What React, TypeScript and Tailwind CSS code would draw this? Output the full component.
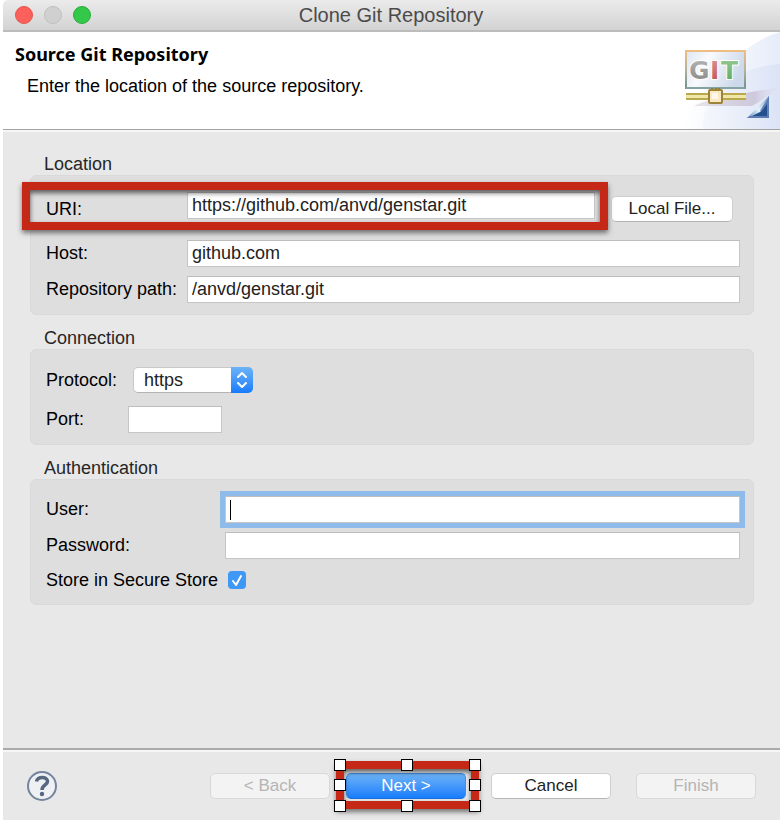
import React from "react";

const fieldBase =
  "block h-[27px] min-w-0 rounded-none border border-[#c6c6c6] border-t-[#bdbdbd] bg-white px-1 text-[18px] leading-[25px] text-[#222] caret-transparent outline-none";

const buttonBase =
  "h-[26px] rounded-[5px] border text-[17px] leading-6 shrink-0";

function Group({
  title,
  first,
  className,
  children,
}: {
  title: string;
  first?: boolean;
  className: string;
  children: React.ReactNode;
}) {
  return (
    <section aria-label={title} className={first ? "pt-[21px]" : "pt-3"}>
      <h2 className="h-[22px] pl-[14px] text-[18px] leading-[22px] text-[#262626]">{title}</h2>
      <div
        className={`relative rounded-[6px] border border-[#d9d9d9] bg-[#dedede] pr-[13px] pl-[15px] ${className}`}
      >
        {children}
      </div>
    </section>
  );
}

function Label({
  htmlFor,
  className,
  children,
}: {
  htmlFor: string;
  className: string;
  children: React.ReactNode;
}) {
  return (
    <label htmlFor={htmlFor} className={`shrink-0 text-[18px] leading-[26px] whitespace-nowrap ${className}`}>
      {children}
    </label>
  );
}

function Handle({ className }: { className: string }) {
  return <span className={`absolute size-3 border border-black bg-white ${className}`} />;
}

function GitBanner() {
  return (
    <svg width="110" height="97" viewBox="0 0 110 97" className="block shrink-0" role="img" aria-label="Git">
      <defs>
        <linearGradient id="sky" x1="0" y1="0" x2="1" y2="0">
          <stop offset="0" stopColor="#ffffff" />
          <stop offset="0.6" stopColor="#f1f5fc" />
          <stop offset="1" stopColor="#e6ecf9" />
        </linearGradient>
        <linearGradient id="hill" x1="0" y1="0" x2="1" y2="0">
          <stop offset="0" stopColor="#f3f6fc" />
          <stop offset="1" stopColor="#d8e0f5" />
        </linearGradient>
        <linearGradient id="screen" x1="0" y1="0" x2="1" y2="0.3">
          <stop offset="0" stopColor="#dde6f2" />
          <stop offset="0.4" stopColor="#f8fafd" />
          <stop offset="1" stopColor="#cdd9ea" />
        </linearGradient>
        <linearGradient id="frame" x1="0" y1="0" x2="0" y2="1">
          <stop offset="0" stopColor="#efbd84" />
          <stop offset="0.5" stopColor="#b6b39c" />
          <stop offset="1" stopColor="#6e9490" />
        </linearGradient>
        <linearGradient id="shade" x1="0" y1="0" x2="1" y2="0">
          <stop offset="0" stopColor="#c9bccb" stopOpacity="0.4" />
          <stop offset="0.7" stopColor="#bfb2c8" stopOpacity="0.6" />
          <stop offset="1" stopColor="#d9d6e8" stopOpacity="0" />
        </linearGradient>
        <linearGradient id="gray" x1="0" y1="0" x2="0" y2="1">
          <stop offset="0" stopColor="#b8b8b8" />
          <stop offset="1" stopColor="#858585" />
        </linearGradient>
        <linearGradient id="red" x1="0" y1="0" x2="0" y2="1">
          <stop offset="0" stopColor="#d99a9c" />
          <stop offset="1" stopColor="#bd4a50" />
        </linearGradient>
        <linearGradient id="green" x1="0" y1="0" x2="0" y2="1">
          <stop offset="0" stopColor="#9bcb9a" />
          <stop offset="1" stopColor="#58a75b" />
        </linearGradient>
        <linearGradient id="foldSide" x1="0" y1="1" x2="1" y2="0">
          <stop offset="0" stopColor="#5f86b4" />
          <stop offset="0.45" stopColor="#e4f3fa" />
          <stop offset="1" stopColor="#7d9cc8" />
        </linearGradient>
      </defs>
      <path d="M110 0C88 6 65 24 48 46C31 58 18 76 12 97H110Z" fill="url(#sky)" />
      <path d="M110 32C86 34 60 43 47 59C37 70 33 84 32 97H110Z" fill="url(#hill)" opacity="0.75" />
      <path d="M24 74C40 66 72 62 110 55C98 64 88 71 82 74Z" fill="url(#shade)" />
      <rect x="16" y="19" width="59" height="37" fill="url(#screen)" stroke="url(#frame)" strokeWidth="2" />
      <rect x="16" y="55" width="59" height="2" fill="#84a3a1" />
      <g fontFamily="'DejaVu Sans', sans-serif" fontWeight="700" fontSize="25" stroke="#ffffff" strokeWidth="2" paintOrder="stroke">
        <text x="19" y="47" fill="url(#gray)">G</text>
        <text x="40" y="47" fill="url(#red)">I</text>
        <text x="51" y="47" fill="url(#green)">T</text>
      </g>
      <rect x="16" y="61" width="60" height="7" fill="#b9a94c" />
      <rect x="16" y="63" width="60" height="3" fill="#efe6a8" />
      <path d="M42 56v3M46 56v3M49 56v3" stroke="#8c7b34" strokeWidth="2" />
      <rect x="39" y="58" width="13" height="13" rx="1" fill="#fbe9c6" stroke="#9c8439" strokeWidth="2" />
      <rect x="42" y="61" width="6" height="6" fill="#fff7ea" />
      <path d="M99 64V86H77Z" fill="url(#foldSide)" />
      <path d="M99 64V86L90 79Z" fill="#5f7fb8" />
      <path d="M97 72V84H82L92 79Z" fill="#24508f" />
      <path d="M77 86H99V84H80Z" fill="#5d7cb4" />
    </svg>
  );
}

export default function App() {
  return (
    <div className="flex min-h-screen flex-col bg-white pl-[3px] font-['Liberation_Sans',Arial,sans-serif] text-black">
      <header className="flex h-8 items-center rounded-tl-[5px] border-b-2 border-[#bcbcbc] bg-linear-to-b from-[#ebebeb] to-[#d3d3d3] pl-3">
        <div className="flex w-[78px] shrink-0 gap-[11px]">
          <button type="button" aria-label="Close" className="size-[18px] rounded-full border border-[#e9534c] bg-[#fc605b]" />
          <button type="button" aria-label="Minimize" className="size-[18px] rounded-full border border-[#bfbfbf] bg-[#d0d0d0]" />
          <button type="button" aria-label="Zoom" className="size-[18px] rounded-full border border-[#2aab3b] bg-[#34c84a]" />
        </div>
        <h1 className="flex-1 pr-[91px] text-center text-[20px] leading-6 text-[#4b4b4b]">Clone Git Repository</h1>
      </header>

      <div className="flex justify-between">
        <div className="pt-[10px] pl-3">
          <h2 className="font-['Noto_Sans','Open_Sans',sans-serif] text-[18px] leading-6 font-bold">
            Source Git Repository
          </h2>
          <p className="pt-2 pl-3 text-[18px] leading-6">Enter the location of the source repository.</p>
        </div>
        <GitBanner />
      </div>

      <main className="flex flex-1 flex-col border-t border-[#a2a2a2] bg-[#e8e8e8]">
        <div className="h-[2px] bg-[#f6f6f6]" />
        <div className="flex-1 pr-[26px] pb-6 pl-[27px]">
          <Group title="Location" first className="pt-4 pb-[11px]">
            <div className="flex h-[30px] items-start">
              <Label htmlFor="uri" className="w-[141px] pt-1">URI:</Label>
              <input id="uri" defaultValue="https://github.com/anvd/genstar.git" className={`${fieldBase} flex-1`} />
              <button type="button" className={`${buttonBase} mr-[7px] ml-4 w-[122px] self-end border-[#cfcfcf] border-b-[#b5b5b5] bg-white text-[#222]`}>
                Local File...
              </button>
            </div>
            <div className="mt-[18px] flex">
              <Label htmlFor="host" className="w-[141px]">Host:</Label>
              <input id="host" defaultValue="github.com" className={`${fieldBase} flex-1`} />
            </div>
            <div className="mt-[9px] flex">
              <Label htmlFor="path" className="w-[141px]">Repository path:</Label>
              <input id="path" defaultValue="/anvd/genstar.git" className={`${fieldBase} flex-1`} />
            </div>
            <div className="pointer-events-none absolute top-[6px] right-[145px] -left-[9px] h-12 border-8 border-[#c62817] shadow-[0_3px_5px_rgba(0,0,0,0.5),inset_0_3px_5px_rgba(0,0,0,0.6)]" />
          </Group>

          <Group title="Connection" className="pt-[17px] pb-[11px]">
            <div className="flex items-center">
              <Label htmlFor="protocol" className="w-[87px]">Protocol:</Label>
              <div className="relative">
                <select id="protocol" defaultValue="https" className="block h-[26px] w-[120px] appearance-none rounded-[5px] border border-[#c8c8c8] border-b-[#b4b4b4] bg-white pl-[10px] text-[18px] leading-6 text-[#222] outline-none">
                  <option>https</option>
                </select>
                <svg width="22" height="26" viewBox="0 0 22 26" className="pointer-events-none absolute top-0 right-0 rounded-r-[5px] bg-linear-to-b from-[#6cb3f6] to-[#147bfc]" fill="none" stroke="#fff" strokeWidth="2" strokeLinecap="round" strokeLinejoin="round" aria-hidden="true">
                  <path d="M7 10l4-4 4 4M7 16l4 4 4-4" />
                </svg>
              </div>
            </div>
            <div className="mt-[13px] flex">
              <Label htmlFor="port" className="w-[82px]">Port:</Label>
              <input id="port" className={`${fieldBase} w-[94px]`} />
            </div>
          </Group>

          <Group title="Authentication" className="pt-4 pb-[11px]">
            <div className="flex">
              <Label htmlFor="user" className="w-[179px]">User:</Label>
              <div className="relative flex-1">
                <input id="user" className={`${fieldBase} w-full outline-5 outline-[#8fbbea] outline-solid`} />
                <span className="pointer-events-none absolute top-1 left-[5px] h-5 w-px bg-black" />
              </div>
            </div>
            <div className="mt-[9px] flex">
              <Label htmlFor="password" className="w-[179px]">Password:</Label>
              <input id="password" type="password" className={`${fieldBase} flex-1`} />
            </div>
            <div className="mt-2 flex items-center">
              <Label htmlFor="store" className="w-[182px]">Store in Secure Store</Label>
              <div className="relative">
                <input id="store" type="checkbox" defaultChecked className="peer block size-[18px] appearance-none rounded-[4px] bg-[#3f97f6]" />
                <svg width="18" height="18" viewBox="0 0 18 18" className="pointer-events-none absolute top-0 left-0 hidden peer-checked:block" fill="none" stroke="#fff" strokeWidth="2" strokeLinecap="round" strokeLinejoin="round" aria-hidden="true">
                  <path d="M5 10l3 4 5-9" />
                </svg>
              </div>
            </div>
          </Group>
        </div>
      </main>

      <footer className="border-t-2 border-[#ababab] bg-[#e8e8e8]">
        <div className="h-[2px] bg-[#f6f6f6]" />
        <div className="flex h-[68px] items-center pr-6 pl-6">
          <button type="button" aria-label="Help" className="mr-auto">
            <svg width="30" height="30" viewBox="0 0 30 30" fill="none">
              <circle cx="15" cy="15" r="14" fill="#eef0f4" stroke="#75839c" strokeWidth="2" />
              <path d="M9.5 10.5C10 5 20.5 5 20.5 10.5C20.5 14 15 14 15 19" stroke="#57677f" strokeWidth="3.5" />
              <circle cx="15" cy="23" r="2.2" fill="#57677f" />
            </svg>
          </button>
          <button type="button" disabled className={`${buttonBase} w-[120px] border-[#d8d8d8] bg-[#f3f3f3] text-[#b5b5b5]`}>
            &lt; Back
          </button>
          <div className="relative mr-[25px] ml-4">
            <button type="button" className={`${buttonBase} block w-[120px] border-[#3f8ee8] border-b-[#1a6fe0] bg-linear-to-b from-[#6bb1f5] to-[#157dfd] text-white`}>
              Next &gt;
            </button>
            <div className="pointer-events-none absolute -top-3 -right-[13px] -left-[10px] h-12 border-8 border-[#c62817] shadow-[0_3px_5px_rgba(0,0,0,0.5),inset_0_3px_5px_rgba(0,0,0,0.6)]">
              <Handle className="-top-[10px] -left-[10px]" />
              <Handle className="-top-[10px] left-[57px]" />
              <Handle className="-top-[10px] -right-[10px]" />
              <Handle className="top-[10px] -left-[10px]" />
              <Handle className="top-[10px] -right-[10px]" />
              <Handle className="-bottom-[11px] -left-[10px]" />
              <Handle className="-bottom-[11px] left-[57px]" />
              <Handle className="-right-[10px] -bottom-[11px]" />
            </div>
          </div>
          <button type="button" className={`${buttonBase} w-[120px] border-[#cfcfcf] border-b-[#b5b5b5] bg-white text-[#222]`}>
            Cancel
          </button>
          <button type="button" disabled className={`${buttonBase} ml-[25px] w-[120px] border-[#d8d8d8] bg-[#f3f3f3] text-[#b5b5b5]`}>
            Finish
          </button>
        </div>
      </footer>
    </div>
  );
}
